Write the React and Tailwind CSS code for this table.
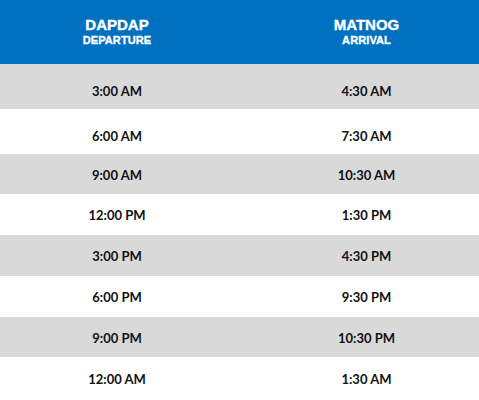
export default function App() {
  const rows = [
    ["3:00 AM", "4:30 AM", "bg-[#d9d9d9]", "h-[45px] pt-[8px]"],
    ["6:00 AM", "7:30 AM", "bg-white", "h-[45px] pt-[9px]"],
    ["9:00 AM", "10:30 AM", "bg-[#d9d9d9]", "h-[40px] pt-[1px]"],
    ["12:00 PM", "1:30 PM", "bg-white", "h-[41px] pt-[1px]"],
    ["3:00 PM", "4:30 PM", "bg-[#d9d9d9]", "h-[41px] pt-[1px]"],
    ["6:00 PM", "9:30 PM", "bg-white", "h-[41px] pt-[1px]"],
    ["9:00 PM", "10:30 PM", "bg-[#d9d9d9]", "h-[40px] pt-[1px]"],
    ["12:00 AM", "1:30 AM", "bg-white", "h-[43px] pt-[1px]"],
  ];
  return (
    <div className="w-[479px] h-[400px] overflow-hidden bg-white">
      <div className="w-[499px]">
        <div className="grid grid-cols-[234px_265px] h-[64px] bg-[#0070c0] text-white font-['Liberation_Sans',Arial,sans-serif] font-bold pt-[16px] [-webkit-text-stroke:0.35px_white]">
          <div className="flex flex-col items-center">
            <div className="text-[15px] leading-[17px]">DAPDAP</div>
            <div className="text-[11px] leading-[12px] mt-[1px] tracking-[0.1px]">DEPARTURE</div>
          </div>
          <div className="flex flex-col items-center">
            <div className="text-[15px] leading-[17px]">MATNOG</div>
            <div className="text-[11px] leading-[12px] mt-[1px] tracking-[0.1px]">ARRIVAL</div>
          </div>
        </div>
        {rows.map(([a, b, bg, h]) => (
          <div
            key={a}
            className={`grid grid-cols-[234px_265px] items-center font-['Lato',sans-serif] font-bold text-[13px] leading-[16px] text-[#111] ${bg} ${h}`}
          >
            <div className="text-center">{a}</div>
            <div className="text-center">{b}</div>
          </div>
        ))}
      </div>
    </div>
  );
}
